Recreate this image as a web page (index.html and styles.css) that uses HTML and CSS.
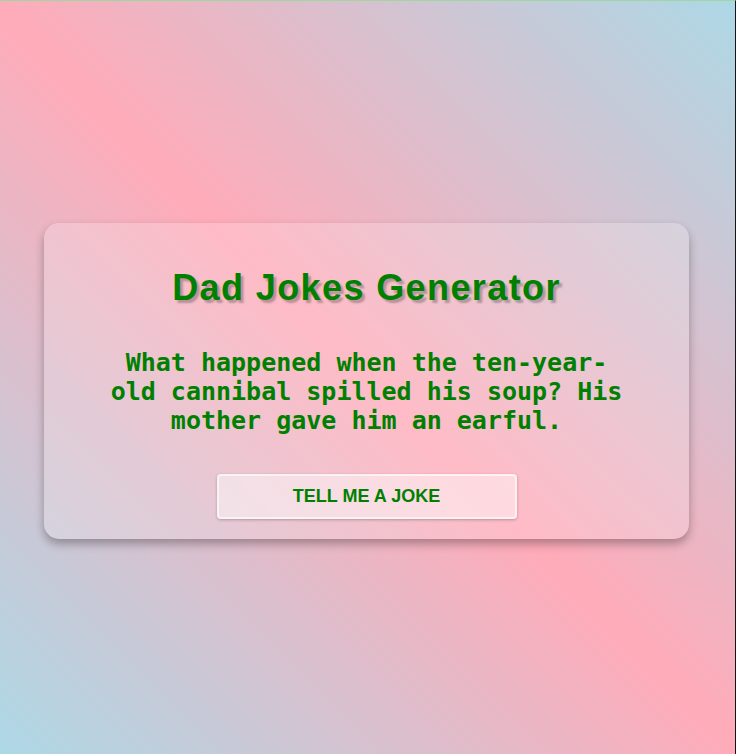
FILE: index.html
```html
<!DOCTYPE html>
<html lang="en">
<head>
<meta charset="utf-8">
<title>Dad Jokes Generator</title>
<link rel="stylesheet" href="styles.css">
</head>
<body>
<main class="card">
  <h1 class="title">Dad Jokes Generator</h1>
  <p class="joke">What happened when the ten-year-old cannibal spilled his soup? His mother gave him an earful.</p>
  <button class="btn" type="button">TELL ME A JOKE</button>
</main>
</body>
</html>
```
FILE: styles.css
```css
html, body {
  margin: 0;
  padding: 0;
}
body {
  min-height: 100vh;
  box-sizing: border-box;
  border-top: 1px solid #9ed89e;
  border-right: 1px solid #151515;
  padding: 7px 2px 0 0;
  display: flex;
  align-items: center;
  justify-content: center;
  background: linear-gradient(45deg, #add8e6 0%, #ffabb9 50%, #add8e6 100%);
  font-family: "Liberation Sans", Arial, sans-serif;
}
.card {
  box-sizing: border-box;
  width: 645px;
  padding: 28px 64px 20px;
  border-radius: 15px;
  background: rgba(255, 255, 255, 0.2);
  box-shadow: 0 5px 10px rgba(0, 0, 0, 0.3);
  display: flex;
  flex-direction: column;
  align-items: center;
  text-align: center;
}
.title {
  margin: 16px 0 0;
  font-size: 36px;
  letter-spacing: 1.4px;
  color: #008000;
  text-shadow: 3px 3px 2px rgba(0, 0, 0, 0.25);
}
.joke {
  margin: 39px 0 0;
  font-family: "DejaVu Sans Mono", monospace;
  font-weight: bold;
  font-size: 25px;
  color: #008000;
}
.btn {
  margin-top: 39px;
  width: 300px;
  height: 45px;
  border: 2px solid rgba(255, 255, 255, 0.6);
  border-radius: 4px;
  background: rgba(255, 255, 255, 0.45);
  box-shadow: 0 1px 3px rgba(0, 0, 0, 0.25);
  font-family: "Liberation Sans", Arial, sans-serif;
  font-weight: bold;
  font-size: 18px;
  color: #008000;
}
```
